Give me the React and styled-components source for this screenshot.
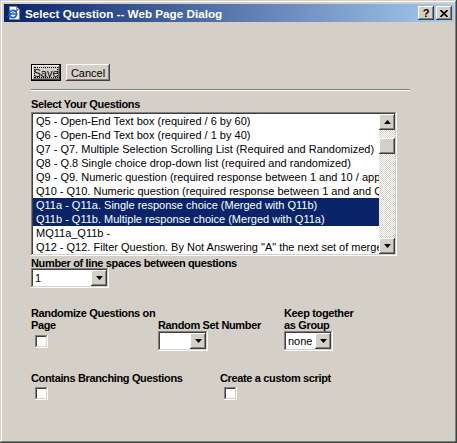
import styled, { createGlobalStyle } from 'styled-components';

const GlobalStyle = createGlobalStyle`
  html, body {
    margin:0;
    padding:0;
    background:#d4d0c8;
  }
  body {
    font-family:"Liberation Sans", Arial, sans-serif;
  }
`;

const raised = `
  box-shadow: inset -1px -1px #404040, inset 1px 1px #ffffff,
    inset -2px -2px #808080, inset 2px 2px #d4d0c8;
`;
const sunken = `
  box-shadow: inset -1px -1px #ffffff, inset 1px 1px #808080,
    inset -2px -2px #d4d0c8, inset 2px 2px #404040;
`;

const Window = styled.div`
  width:457px;
  height:443px;
  box-sizing:border-box;
  padding:4px 3px 3px 4px;
  display:flex;
  flex-direction:column;
  background:#d4d0c8;
  box-shadow: inset -1px -1px #404040, inset 1px 1px #d4d0c8,
    inset -2px -2px #808080, inset 2px 2px #ffffff;
`;
const TitleBar = styled.div`
  height:18px;
  display:flex;
  align-items:center;
  padding:0 2px;
  background:linear-gradient(to right, #0a246a, #a6caf0);
`;
const TitleText = styled.span`
  flex:1;
  margin-left:3px;
  color:#fff;
  font-weight:bold;
  font-size:11.7px;
  white-space:nowrap;
`;
const CaptionButtons = styled.div`
  display:flex;
  gap:2px;
`;
const CaptionButton = styled.div`
  width:16px;
  height:14px;
  box-sizing:border-box;
  background:#d4d0c8;
  ${raised}
  display:flex;
  align-items:center;
  justify-content:center;
  font-weight:bold;
  font-size:11px;
  color:#000;
`;
const Body = styled.div`
  flex:1;
  padding-left:27px;
  display:flex;
  flex-direction:column;
  align-items:flex-start;
`;
const ButtonRow = styled.div`
  margin-top:42px;
  display:flex;
  gap:5px;
`;
const Button = styled.button`
  height:17px;
  width:${p => p.$width}px;
  box-sizing:border-box;
  padding:0;
  border:${p => (p.$default ? '1px solid #000' : 'none')};
  background:#d4d0c8;
  ${raised}
  font-family:"Liberation Sans", Arial, sans-serif;
  font-size:11px;
  color:#000;
  display:flex;
  align-items:center;
  justify-content:center;
`;
const Focus = styled.span`
  width:22px;
  height:9px;
  display:flex;
  align-items:center;
  justify-content:center;
  outline:1px dotted #000;
`;
const Rule = styled.div`
  margin-top:8px;
  width:379px;
  border-top:1px solid #808080;
  border-bottom:1px solid #ffffff;
`;
const Label = styled.div`
  margin-top:${p => p.$top || 0}px;
  font-weight:bold;
  font-size:11px;
  letter-spacing:-0.35px;
  line-height:12px;
  color:#000;
  white-space:nowrap;
`;
const ListBox = styled.div`
  margin-top:2px;
  width:366px;
  height:144px;
  box-sizing:border-box;
  padding:2px;
  display:flex;
  background:#fff;
  ${sunken}
`;
const Options = styled.div`
  flex:1;
  min-width:0;
  overflow:hidden;
`;
const Option = styled.div`
  height:14px;
  line-height:14px;
  padding-left:3px;
  font-size:11px;
  white-space:nowrap;
  background:${p => (p.$selected ? '#0a246a' : 'transparent')};
  color:${p => (p.$selected ? '#fff' : '#000')};
`;
const ScrollBar = styled.div`
  width:16px;
  display:flex;
  flex-direction:column;
`;
const ScrollButton = styled.div`
  width:16px;
  height:16px;
  flex:none;
  box-sizing:border-box;
  background:#d4d0c8;
  ${raised}
  display:flex;
  align-items:center;
  justify-content:center;
`;
const Track = styled.div`
  flex:1;
  background:repeating-conic-gradient(#d4d0c8 0 25%, #ffffff 0 50%) 0 0 / 2px 2px;
`;
const Thumb = styled(ScrollButton)`
  margin-top:${p => p.$offset}px;
`;
const Select = styled.div`
  margin-top:${p => p.$top || 0}px;
  width:${p => p.$width}px;
  height:20px;
  box-sizing:border-box;
  padding:2px;
  display:flex;
  background:#fff;
  ${sunken}
`;
const SelectValue = styled.div`
  flex:1;
  padding-left:2px;
  font-size:11px;
  line-height:16px;
  color:#000;
`;
const OptionGrid = styled.div`
  margin-top:${p => p.$top}px;
  display:grid;
  grid-template-columns:${p => p.$columns};
`;
const GridLabel = styled(Label)`
  align-self:end;
`;
const Check = styled.input`
  appearance:none;
  margin:${p => p.$top}px 0 0 4px;
  width:13px;
  height:13px;
  background:#fff;
  ${sunken}
`;

function Arrow({ down }) {
  return (
    <svg width="7" height="4" viewBox="0 0 7 4">
      <path d={down ? 'M0 0h7L3.5 4z' : 'M0 4h7L3.5 0z'} fill="#000" />
    </svg>
  );
}

function PageIcon() {
  return (
    <svg width="16" height="16" viewBox="0 0 16 16">
      <path d="M3.5 1.5h7l3 3v10h-10z" fill="#fff" stroke="#808080" />
      <path d="M10.5 1.5v3h3" fill="none" stroke="#808080" />
      <circle cx="7" cy="9" r="3.6" fill="none" stroke="#1c5fd6" strokeWidth="1.8" />
      <path d="M4 9h6" stroke="#1c5fd6" strokeWidth="1.4" />
      <path d="M1 12c3-2 7-6 11-7" fill="none" stroke="#1c5fd6" strokeWidth="1" />
    </svg>
  );
}

function Dropdown({ width, value, top }) {
  return (
    <Select $width={width} $top={top}>
      <SelectValue>{value}</SelectValue>
      <ScrollButton><Arrow down /></ScrollButton>
    </Select>
  );
}

const questions = [
  'Q5 - Open-End Text box (required / 6 by 60)',
  'Q6 - Open-End Text box (required / 1 by 40)',
  'Q7 - Q7. Multiple Selection Scrolling List (Required and Randomized)',
  'Q8 - Q.8 Single choice drop-down list (required and randomized)',
  'Q9 - Q9. Numeric question (required response between 1 and 10 / appears on page)',
  'Q10 - Q10. Numeric question (required response between 1 and and Q9 answer)',
  'Q11a - Q11a. Single response choice (Merged with Q11b)',
  'Q11b - Q11b. Multiple response choice (Merged with Q11a)',
  'MQ11a_Q11b -',
  'Q12 - Q12. Filter Question. By Not Answering "A" the next set of merged questions',
];
const selected = [6, 7];

export default function App() {
  return (
    <Window>
      <GlobalStyle />
      <TitleBar>
        <PageIcon />
        <TitleText>Select Question -- Web Page Dialog</TitleText>
        <CaptionButtons>
          <CaptionButton>?</CaptionButton>
          <CaptionButton>
            <svg width="8" height="7" viewBox="0 0 8 7">
              <path d="M0.5 0l7 7M7.5 0l-7 7" stroke="#000" strokeWidth="1.6" />
            </svg>
          </CaptionButton>
        </CaptionButtons>
      </TitleBar>
      <Body>
        <ButtonRow>
          <Button $width={30} $default><Focus>Save</Focus></Button>
          <Button $width={44}>Cancel</Button>
        </ButtonRow>
        <Rule />
        <Label $top={7}>Select Your Questions</Label>
        <ListBox>
          <Options>
            {questions.map((q, i) => (
              <Option key={i} $selected={selected.includes(i)}>{q}</Option>
            ))}
          </Options>
          <ScrollBar>
            <ScrollButton><Arrow /></ScrollButton>
            <Track>
              <Thumb $offset={8} />
            </Track>
            <ScrollButton><Arrow down /></ScrollButton>
          </ScrollBar>
        </ListBox>
        <Label $top={1}>Number of line spaces between questions</Label>
        <Dropdown width={78} value="1" top={-1} />
        <OptionGrid $top={19} $columns="127px 126px auto">
          <GridLabel>Randomize Questions on<br />Page</GridLabel>
          <GridLabel>Random Set Number</GridLabel>
          <GridLabel>Keep together<br />as Group</GridLabel>
          <div><Check type="checkbox" $top={4} /></div>
          <Dropdown width={50} value="" top={0} />
          <Dropdown width={49} value="none" top={0} />
        </OptionGrid>
        <OptionGrid $top={20} $columns="189px auto">
          <GridLabel>Contains Branching Questions</GridLabel>
          <GridLabel>Create a custom script</GridLabel>
          <div><Check type="checkbox" $top={3} /></div>
          <div><Check type="checkbox" $top={3} /></div>
        </OptionGrid>
      </Body>
    </Window>
  );
}
